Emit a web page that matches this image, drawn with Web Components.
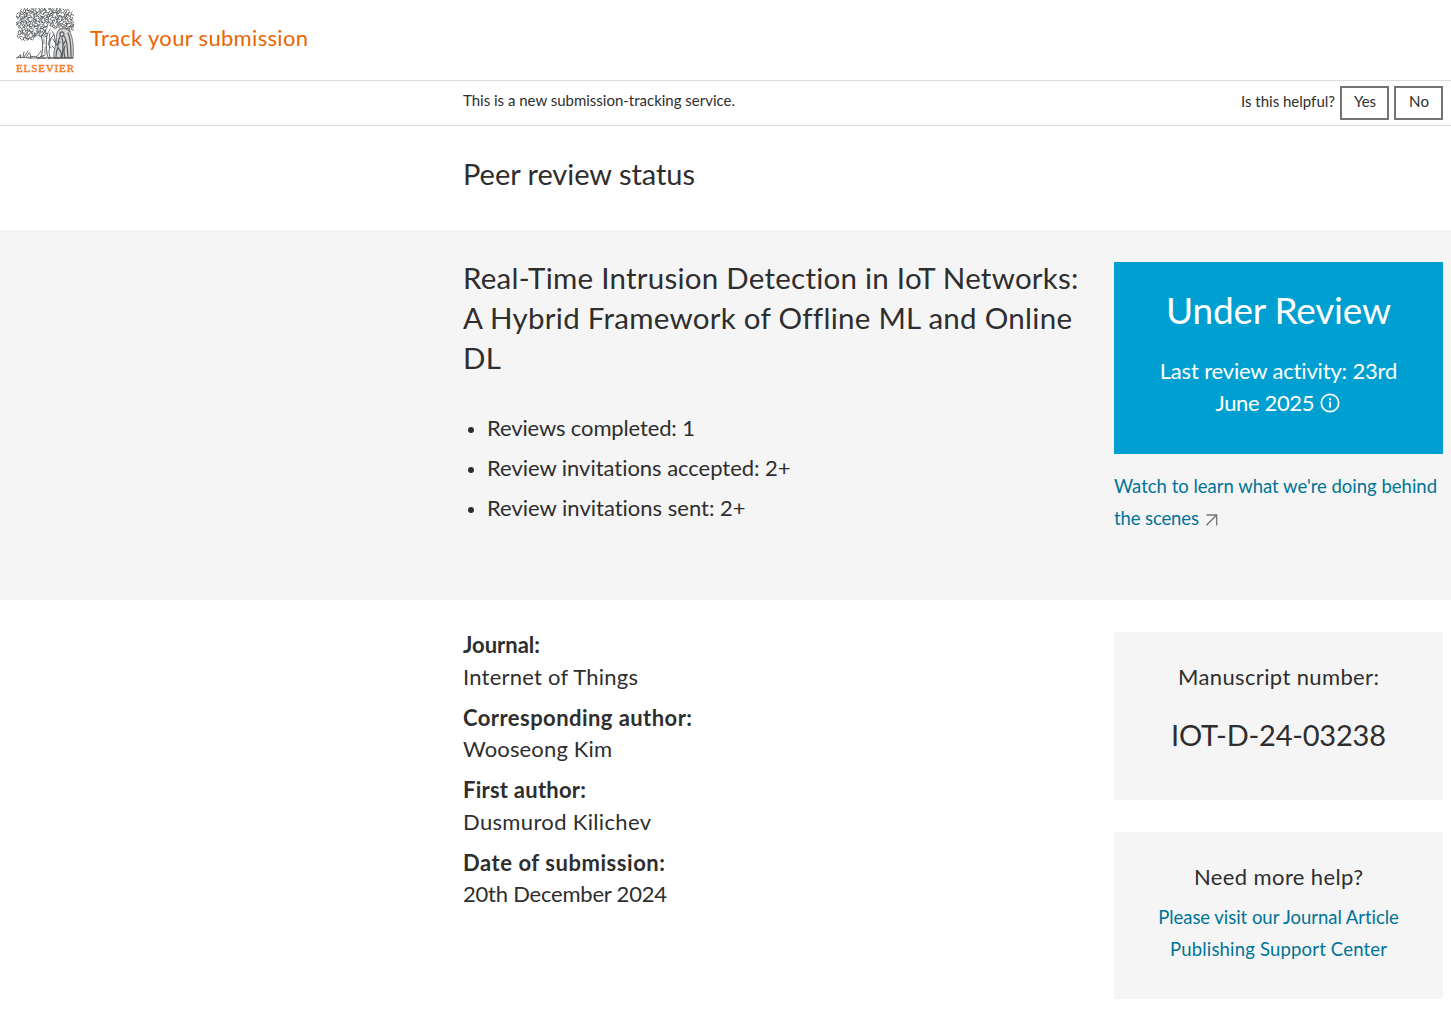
<!DOCTYPE html>
<html lang="en">
<head>
<meta charset="utf-8">
<title>Track your submission</title>
<style>
body{margin:0;background:#fff;color:#2e2e2e;font-family:Lato,"Open Sans",sans-serif;font-size:22px;line-height:32px}
</style>
</head>
<body>
<track-app></track-app>
<script>
const define=(name,html,init)=>customElements.define(name,class extends HTMLElement{
  constructor(){super();this.attachShadow({mode:'open'}).innerHTML=html;if(init)init.call(this,this.shadowRoot)}
});

// One line of copy, tracked so that it spans the width given in its attribute.
customElements.define('text-line',class extends HTMLElement{
  constructor(){super();this.attachShadow({mode:'open'}).innerHTML='<style>:host{display:block;white-space:nowrap}span{display:inline-block}</style><span><slot></slot></span>'}
  connectedCallback(){
    const s=this.shadowRoot.querySelector('span'),w=+this.getAttribute('w');
    const n=this.textContent.length;
    const d=(w-s.getBoundingClientRect().width)/(n-1);
    s.style.letterSpacing=d+'px';s.style.marginRight=-d+'px';
  }
});

define('elsevier-logo',`<style>:host{display:block;width:58px;height:65px}svg{display:block}</style>
<svg width="58" height="65" viewBox="0 0 58 65" fill="none" stroke="#55585b" stroke-linecap="round">
<g id="leaves" stroke-width=".85"></g>
<path d="M25 27c2 7 2 12 1 18-.5 3-2 5-4 6M31 27c-1 7-1 12 0 18 0 3 1 4 2 6" stroke-width="1"/>
<path d="M28 31v5M29 39v7M27 47v3M26 29l-8-3M30 29l4-8" stroke-width=".7"/>
<path d="M34 25c-1 3 0 6-1 9M36 23c1 1 2 3 1 5l-2 2c-2 5-1 9-2 14l1 6M38 26c1 4 1 8 3 12M35 31l-3 5 3 4M37 31l3 5 3 1M36 38l5 5" stroke-width=".9"/>
<path d="M43 22c-4 4-2 8-3 13-1 6-3 10-2 15h19c1-9 0-20-3-26-2-3-7-5-11-2z" fill="#d4d5d6" stroke-width=".8"/>
<path d="M44 25c2-2 4-1 4 1s-2 3-4 2zM44 29c-3 4-1 9-3 13-1 3-1 5-1 8M48 28c4 5 3 12 4 21M52 25c3 6 3 15 3 24M46 30c2 6 1 12 0 20M44 34l-4 3M50 32l-3 5M42 40c3 3 4 6 3 9M49 38c-2 4-1 8 0 12" stroke-width="1.2"/>
<path d="M0 50c5-2 9 1 14-1s9 2 15 1 10 1 15 0 9 0 13 0M5 50l-1-3M7 49l1-5M8 49l4-6M10 49l3-4M15 50l-1-5M2 49l3-2M20 49c3-3 4-4 5-6M22 50l7-3M12 50h18M33 50h23" stroke-width=".9"/>
<text x="0" y="64" fill="#f47b20" stroke="#f47b20" stroke-width=".4" font-family="'Liberation Serif',serif" font-size="11" textLength="58" lengthAdjust="spacing">ELSEVIER</text>
</svg>`,function(r){
  // Foliage: short curled strokes scattered over the crown of the tree.
  let seed=37,d='';const rnd=()=>(seed=(seed*16807)%2147483647)/2147483647;
  const inside=(x,y)=>((x-15)/15)**2+((y-10)/10)**2<1||((x-42)/16)**2+((y-10)/10)**2<1||((x-28)/14)**2+((y-9)/9)**2<1||((x-11)/10)**2+((y-26)/6)**2<1||((x-50)/8)**2+((y-17)/8)**2<1||((x-7)/7)**2+((y-15)/7)**2<1||((x-26)/6)**2+((y-21)/8)**2<1;
  for(let y=0;y<33;y+=2.3)for(let x=0;x<58;x+=2.3){
    const px=x+rnd()*1.6,py=y+rnd()*1.6;if(!inside(px,py))continue;
    const a=rnd()*6.28,c=Math.cos(a)*1.6,s=Math.sin(a)*1.6;
    d+=`M${(px-c).toFixed(1)} ${(py-s).toFixed(1)}q${(c-s*1.4).toFixed(1)} ${(s+c*1.4).toFixed(1)} ${(2*c).toFixed(1)} ${(2*s).toFixed(1)}`;
  }
  const p=document.createElementNS('http://www.w3.org/2000/svg','path');p.setAttribute('d',d);r.querySelector('#leaves').append(p);
});

define('site-header',`<style>:host{display:flex;box-sizing:border-box;height:81px;padding:8px 16px;gap:16px;border-bottom:1px solid #dcdcdc;color:#eb6500}text-line{padding-top:14px}</style>
<elsevier-logo></elsevier-logo><text-line w="218">Track your submission</text-line>`);

define('choice-button',`<style>:host{display:block}button{display:flex;justify-content:center;box-sizing:border-box;width:49px;height:34px;padding:0 0 0 1px;border:2px solid #737373;background:#fff;color:inherit;font:inherit;line-height:27px}</style><button><slot></slot></button>`);

define('feedback-bar',`<style>:host{display:flex;justify-content:space-between;box-sizing:border-box;height:45px;padding:5px 8px 0 463px;border-bottom:1px solid #dcdcdc;font-size:15px;line-height:28px}div{display:flex;gap:5px}.q{padding-top:1px}</style>
<text-line w="272">This is a new submission-tracking service.</text-line>
<div><text-line class="q" w="94">Is this helpful?</text-line><choice-button><text-line w="22">Yes</text-line></choice-button><choice-button><text-line w="20">No</text-line></choice-button></div>`);

define('page-heading',`<style>:host{display:block;box-sizing:border-box;height:104px;padding:28px 0 0 463px;font-size:29px;line-height:40px}</style><text-line w="232">Peer review status</text-line>`);

define('info-icon',`<style>:host{display:block;width:20px;height:20px}svg{display:block}</style><svg width="20" height="20" viewBox="0 0 20 20" fill="none" stroke="currentColor"><circle cx="10" cy="10" r="8.7" stroke-width="1.7"/><path d="M10 8.7v5.8" stroke-width="2"/><path d="M10 5.2v2" stroke-width="2"/></svg>`);
define('arrow-icon',`<style>:host{display:block;width:12px;height:12px}svg{display:block}</style><svg width="12" height="12" viewBox="0 0 12 12" fill="none" stroke="#737373" stroke-width="1.3"><path d="M.5 1h10.2v10.5M10.7 1L.5 11.3"/></svg>`);

define('status-box',`<style>:host{display:flex;flex-direction:column;align-items:center;box-sizing:border-box;height:192px;padding-top:24px;background:#009fd1;color:#fff}.s{font-size:37px;line-height:48px;margin-bottom:21px}.r{display:flex;gap:6px;margin-right:1px}info-icon{margin-top:6px}</style>
<text-line class="s" w="225">Under Review</text-line><text-line w="238">Last review activity: 23rd</text-line><div class="r"><text-line w="99">June 2025</text-line><info-icon></info-icon></div>`);

define('watch-link',`<style>:host{display:block;margin-top:16px;color:#007398;font-size:18.5px}div{display:flex;gap:7px}arrow-icon{margin-top:12px}</style>
<text-line w="323">Watch to learn what we're doing behind</text-line><div><text-line w="85">the scenes</text-line><arrow-icon></arrow-icon></div>`);

define('review-list',`<style>:host{display:block;margin-top:34px;line-height:32px}ul{list-style:none;margin:0;padding:0;display:flex;flex-direction:column;gap:8px}li{display:flex;align-items:center;gap:13px;padding-left:5px}li::before{content:"";width:6px;height:6px;border-radius:50%;background:#2e2e2e;margin-top:4px}</style>
<ul><li><text-line w="208">Reviews completed: 1</text-line></li><li><text-line w="304">Review invitations accepted: 2+</text-line></li><li><text-line w="259">Review invitations sent: 2+</text-line></li></ul>`);

define('review-summary',`<style>:host{display:flex;box-sizing:border-box;height:370px;padding:28px 8px 0 463px;background:#f5f5f5}main{flex:1}.t{font-size:29.5px;line-height:40px}aside{width:329px;padding-top:4px}</style>
<main><div class="t"><text-line w="616">Real-Time Intrusion Detection in IoT Networks:</text-line><text-line w="608">A Hybrid Framework of Offline ML and Online</text-line><text-line w="38">DL</text-line></div><review-list></review-list></main>
<aside><status-box></status-box><watch-link></watch-link></aside>`);

define('meta-field',`<style>:host{display:block;height:72.5px;line-height:31.5px}.l{font-weight:bold}</style><div class="l"><slot name="label"></slot></div><slot></slot>`);

define('side-card',`<style>:host{display:flex;flex-direction:column;align-items:center;box-sizing:border-box;height:168px;padding-top:29px;background:#f5f5f5}</style><slot></slot>`);

define('submission-details',`<style>:host{display:flex;padding:0 8px 0 463px}main{flex:1;padding-top:29px}aside{display:flex;flex-direction:column;gap:32px;width:329px;padding-top:32px}.n{font-size:29px;line-height:40px;margin-top:22px}.h{margin-bottom:8px}.a{color:#007398;font-size:18.5px}.help{height:167px}</style>
<main>
<meta-field><text-line slot="label" w="77">Journal:</text-line><text-line w="175">Internet of Things</text-line></meta-field>
<meta-field><text-line slot="label" w="229">Corresponding author:</text-line><text-line w="149">Wooseong Kim</text-line></meta-field>
<meta-field><text-line slot="label" w="123">First author:</text-line><text-line w="188">Dusmurod Kilichev</text-line></meta-field>
<meta-field><text-line slot="label" w="202">Date of submission:</text-line><text-line w="204">20th December 2024</text-line></meta-field>
</main>
<aside><side-card><text-line w="201">Manuscript number:</text-line><text-line class="n" w="215">IOT-D-24-03238</text-line></side-card>
<side-card class="help"><text-line class="h" w="169">Need more help?</text-line><text-line class="a" w="241">Please visit our Journal Article</text-line><text-line class="a" w="217">Publishing Support Center</text-line></side-card></aside>`);

define('track-app',`<style>:host{display:block}</style><site-header></site-header><feedback-bar></feedback-bar><page-heading></page-heading><review-summary></review-summary><submission-details></submission-details>`);
</script>
</body>
</html>
